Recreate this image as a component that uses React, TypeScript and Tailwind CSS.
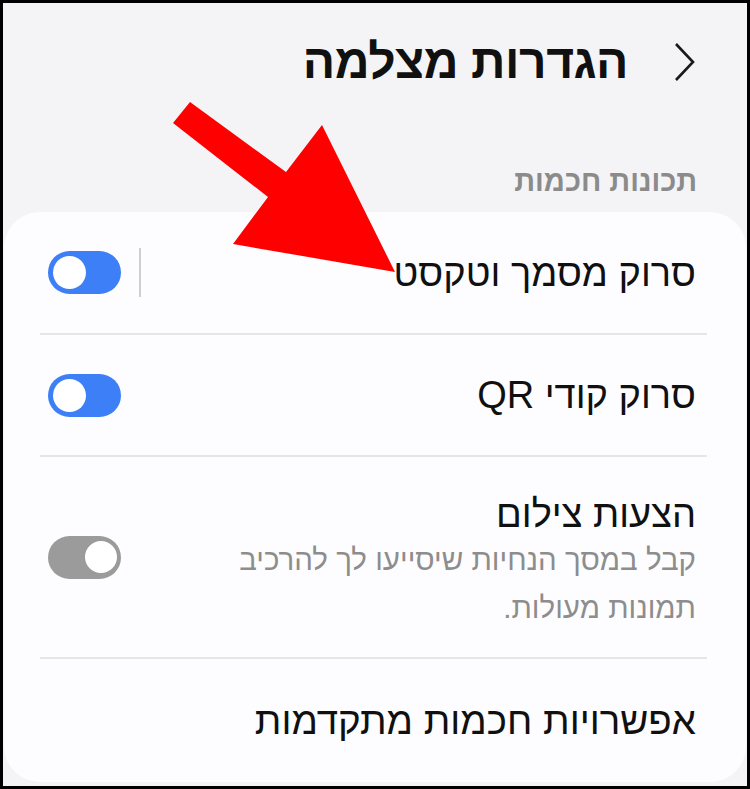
import React from "react";

function Toggle({ on }: { on: boolean }) {
  if (on) {
    return (
      <div className="w-[73px] h-[43px] rounded-full bg-[#3d7ff6] flex items-center justify-end pr-[5px] pl-[5px] shrink-0">
        <div className="w-[33px] h-[33px] rounded-full bg-white" />
      </div>
    );
  }
  return (
    <div className="w-[73px] h-[43px] rounded-full bg-[#9b9b9b] flex items-center justify-start shrink-0">
      <div className="w-[38px] h-[38px] rounded-full bg-white border-[3px] border-[#9b9b9b] box-border mr-[1px]" />
    </div>
  );
}

function Divider() {
  return <div className="h-[2px] bg-[#e6e6e9] mr-[39px] ml-[36px]" />;
}

export default function App() {
  return (
    <div className="w-[750px] h-[789px] bg-black p-[3px]">
      <div
        dir="rtl"
        className="relative w-full h-full bg-[#f4f4f6] overflow-hidden text-[#101010]"
        style={{ fontFamily: '"Liberation Sans", "DejaVu Sans", Arial, sans-serif' }}
      >
        {/* Header */}
        <div className="h-[118px] flex items-center pr-[52px]">
          <svg width="22" height="40" viewBox="0 0 22 40" className="shrink-0">
            <path d="M3 2 L20 20 L3 38" fill="none" stroke="#1a1a1a" strokeWidth="2.6" strokeLinejoin="miter" />
          </svg>
          <h1 className="mr-[45px] text-[48px] leading-[48px] font-bold tracking-[-0.5px]">הגדרות מצלמה</h1>
        </div>

        {/* Section label */}
        <div className="mt-[45px] pr-[50px] h-[30px] text-[29px] leading-[30px] font-bold text-[#8b8b8b]">
          תכונות חכמות
        </div>

        {/* Card */}
        <div className="mt-[16px] mx-[1px] h-[570px] rounded-[36px] bg-[#fdfdff] flex flex-col">
          <div className="h-[121px] flex items-center justify-between pr-[50px] pl-[44px]">
            <span className="text-[38px] leading-[44px]">סרוק מסמך וטקסט</span>
            <div className="flex items-center">
              <div className="w-[2px] h-[49px] bg-[#cfcfd1] ml-[18px]" />
              <Toggle on />
            </div>
          </div>
          <Divider />
          <div className="h-[120px] flex items-center justify-between pr-[50px] pl-[44px]">
            <span className="text-[38px] leading-[44px]">סרוק קודי QR</span>
            <Toggle on />
          </div>
          <Divider />
          <div className="h-[200px] flex items-center justify-between pr-[50px] pl-[44px]">
            <div className="pt-[36px] pb-[26px] flex flex-col">
              <span className="text-[38px] leading-[44px]">הצעות צילום</span>
              <span className="text-[29.5px] leading-[48px] text-[#8d8d8d]">
                קבל במסך הנחיות שיסייעו לך להרכיב
                <br />
                תמונות מעולות.
              </span>
            </div>
            <Toggle on={false} />
          </div>
          <Divider />
          <div className="flex-1 flex items-center pr-[50px] pl-[44px]">
            <span className="text-[38.5px] leading-[44px]">אפשרויות חכמות מתקדמות</span>
          </div>
        </div>

        {/* Red arrow overlay */}
        <svg
          className="absolute top-0 left-0 pointer-events-none"
          width="744"
          height="783"
          viewBox="3 3 744 783"
        >
          <polygon
            points="190,102 286,172 322,125 395,272 233,244 268,197 173,123"
            fill="#ff0000"
          />
        </svg>
      </div>
    </div>
  );
}
